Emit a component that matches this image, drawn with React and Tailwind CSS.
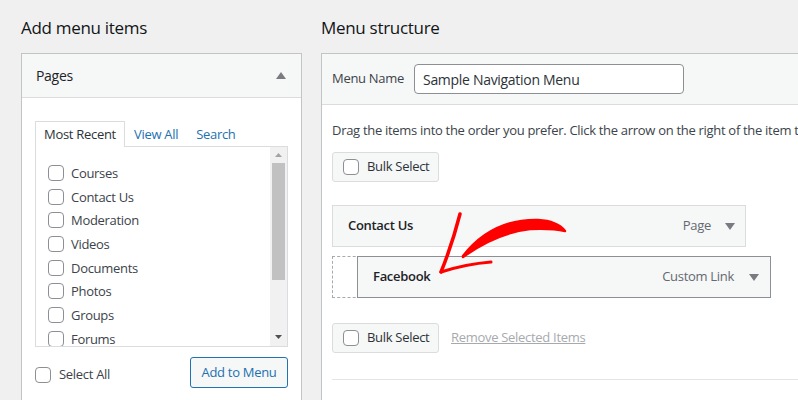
import React from 'react';

const pages = ['Courses', 'Contact Us', 'Moderation', 'Videos', 'Documents', 'Photos', 'Groups', 'Forums'];

const Box = () => (
  <span className="inline-block w-4 h-4 shrink-0 rounded-[4px] border border-[#8c8f94] bg-white" />
);

const Tri = ({ up, color = '#787c82' }) => (
  <svg width="10" height="7" viewBox="0 0 10 7" className="shrink-0">
    {up ? <path d="M5 0 L10 7 L0 7 Z" fill={color} /> : <path d="M0 0 L10 0 L5 7 Z" fill={color} />}
  </svg>
);

const BulkSelect = () => (
  <div className="flex items-center gap-2 h-[30px] w-[107px] pl-[10px] rounded-[3px] border border-[#dcdcde] bg-[#f6f7f7] text-[13px] text-[#2c3338]">
    <Box />
    <span>Bulk Select</span>
  </div>
);

const App = () => {
  return (
    <div className="relative w-[798px] h-[400px] overflow-hidden bg-[#f0f0f1] font-['Open_Sans',sans-serif] tracking-[-0.3px] text-[#3c434a]">
      <div className="flex pt-[15px]">
        {/* Left column */}
        <div className="w-[281px] ml-[21px] shrink-0">
          <h2 className="h-[26px] text-[17px] font-medium text-[#101517] leading-[26px] mb-[12px]">Add menu items</h2>
          <div className="border border-[#c3c4c7] bg-white h-[400px]">
            <div className="flex items-center justify-between h-[44px] pl-[14px] pr-[15px] bg-[#f6f7f7] border-b border-[#dcdcde]">
              <span className="text-[14px] text-[#1d2327]">Pages</span>
              <Tri up color="#787c82" />
            </div>
            <div className="px-[13px] pt-[23px]">
              <div className="flex items-end text-[13px] h-[26px]">
                <div className="h-[26px] w-[90px] flex items-center justify-center border border-b-0 border-[#dcdcde] bg-white text-[#2c3338] relative z-10">Most Recent</div>
                <span className="ml-[9px] text-[#2271b1] h-[26px] leading-[26px]">View All</span>
                <span className="ml-[18px] text-[#2271b1] h-[26px] leading-[26px]">Search</span>
              </div>
              <div className="flex h-[201px] border border-[#dcdcde] -mt-px">
                <ul className="flex-1 pt-[14px] pl-[12px] overflow-hidden">
                  {pages.map((p) => (
                    <li key={p} className="flex items-center gap-[7px] h-[23.7px] text-[13px] leading-[16px] text-[#3c434a]">
                      <Box />
                      <span>{p}</span>
                    </li>
                  ))}
                </ul>
                <div className="w-[17px] bg-[#f1f1f1] flex flex-col items-center">
                  <div className="h-[16px] flex items-center justify-center">
                    <svg width="7" height="4" viewBox="0 0 7 4"><path d="M3.5 0 L7 4 L0 4 Z" fill="#a3a3a3" /></svg>
                  </div>
                  <div className="w-[13px] h-[117px] bg-[#c1c1c1]" />
                  <div className="flex-1" />
                  <div className="h-[18px] flex items-center justify-center">
                    <svg width="7" height="4" viewBox="0 0 7 4"><path d="M0 0 L7 0 L3.5 4 Z" fill="#505050" /></svg>
                  </div>
                </div>
              </div>
              <div className="flex items-center justify-between mt-[10px]">
                <div className="flex items-center gap-[8px] text-[13px] text-[#3c434a] mt-[4px]">
                  <Box />
                  <span>Select All</span>
                </div>
                <div className="h-[31px] w-[98px] flex items-center justify-center rounded-[3px] border border-[#2271b1] bg-[#f6f7f7] text-[13px] text-[#2271b1]">Add to Menu</div>
              </div>
            </div>
          </div>
        </div>

        {/* Right column */}
        <div className="flex-1 ml-[19px]">
          <h2 className="h-[26px] text-[17px] font-medium text-[#101517] leading-[26px] mb-[12px]">Menu structure</h2>
          <div className="border-l border-t border-[#c3c4c7] bg-white h-[400px]">
            <div className="flex items-center h-[51px] pl-[10px] bg-[#f6f7f7] border-b border-[#dcdcde]">
              <span className="w-[82px] text-[13px] text-[#3c434a]">Menu Name</span>
              <div className="h-[30px] w-[270px] flex items-center px-[8px] rounded-[4px] border border-[#8c8f94] bg-white text-[14px] text-[#2c3338]">Sample Navigation Menu</div>
            </div>
            <div className="pl-[10px]">
              <p className="mt-[15px] h-[20px] leading-[20px] text-[13px] text-[#3c434a] whitespace-nowrap">Drag the items into the order you prefer. Click the arrow on the right of the item to reveal additional configuration options.</p>
              <div className="mt-[12px]">
                <BulkSelect />
              </div>
              <div className="mt-[23px] w-[414px] h-[42px] flex items-center pl-[15px] pr-[10px] border border-[#dcdcde] bg-[#f6f7f7]">
                <span className="flex-1 text-[13px] font-semibold text-[#1d2327]">Contact Us</span>
                <span className="text-[13px] text-[#646970]">Page</span>
                <span className="ml-[14px]"><Tri color="#787c82" /></span>
              </div>
              <div className="mt-[9px] relative h-[42px]">
                <div className="absolute left-0 top-0 w-[60px] h-[42px] border border-dashed border-[#a7aaad]" />
                <div className="absolute left-[25px] top-0 w-[414px] h-[42px] flex items-center pl-[15px] pr-[11px] border border-[#8c8f94] bg-[#f6f7f7]">
                  <span className="flex-1 text-[13px] font-semibold text-[#1d2327]">Facebook</span>
                  <span className="text-[13px] text-[#646970]">Custom Link</span>
                  <span className="ml-[15px]"><Tri color="#787c82" /></span>
                </div>
              </div>
              <div className="mt-[25px] flex items-center">
                <BulkSelect />
                <span className="ml-[12px] text-[13px] text-[#a7aaad] underline">Remove Selected Items</span>
              </div>
              <div className="mt-[26px] border-t border-[#e5e5e5]" />
            </div>
          </div>
        </div>
      </div>

      {/* hand-drawn annotation arrow */}
      <svg className="absolute left-0 top-0 pointer-events-none" width="798" height="400" viewBox="0 0 798 400">
        <path d="M463 256 Q492 219 538 220 Q557 221 565 231 Q552 228 530 229 Q496 233 463 257 Z" fill="#ff0000" stroke="#ff0000" strokeWidth="2.5" strokeLinejoin="round" />
        <path d="M460 214 Q452 245 441 272" fill="none" stroke="#ff0000" strokeWidth="3.5" strokeLinecap="round" />
        <path d="M441 272 Q466 264 491 262" fill="none" stroke="#ff0000" strokeWidth="3" strokeLinecap="round" />
      </svg>
    </div>
  );
};

export default App;
